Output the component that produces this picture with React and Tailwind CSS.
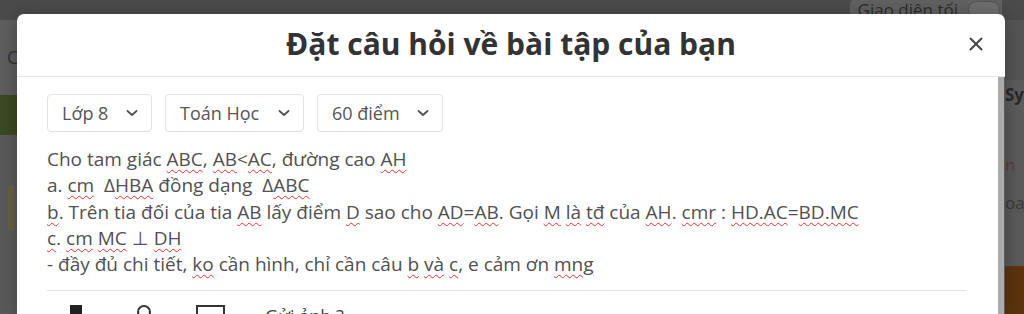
import React from "react";

const U = ({ children }) => (
  <span className="underline decoration-wavy decoration-[#e03131] decoration-1 underline-offset-[3px]">
    {children}
  </span>
);

const Chevron = () => (
  <svg width="12" height="8" viewBox="0 0 12 8" className="shrink-0">
    <path d="M1.5 2 L6 6 L10.5 2" fill="none" stroke="#555" strokeWidth="1.9" strokeLinecap="round" strokeLinejoin="round" />
  </svg>
);

const Select = ({ label, w }) => (
  <div className={`h-[38px] ${w} flex items-center justify-between pl-[14px] pr-[13px] border border-[#e2e2e2] rounded-[4px] text-[18px] text-[#555]`}>
    <span>{label}</span>
    <Chevron />
  </div>
);

export default function App() {
  return (
    <div className="relative w-[1024px] h-[314px] overflow-hidden bg-[#5b5b5b] font-['Open_Sans',sans-serif]">
      {/* dimmed page behind */}
      <div className="flex flex-col h-full">
        <div className="h-[20px] shrink-0 bg-[#4b4b4b] flex justify-end items-start pr-[22px]">
          <div className="flex items-center gap-[10px] bg-[#616161] pl-[8px] pr-[2px] rounded-l-[4px] h-[20px]">
            <span className="text-[17px] leading-[20px] text-[#2c2c2c]">Giao diện tối</span>
            <div className="w-[32px] h-[18px] rounded-full bg-[#6e6e6e] border border-[#555]" />
          </div>
        </div>
        <div className="flex flex-1">
          <div className="w-[17px] flex flex-col">
            <div className="h-[75px] flex items-center bg-[#5f5f5f]">
              <span className="text-[18px] text-[#333] pl-[7px]">C</span>
            </div>
            <div className="h-[40px] bg-[#3c4a23]" />
            <div className="h-[50px]" />
            <div className="w-[7px] h-[45px] ml-[8px] bg-[#6a6248] rounded-t-full" />
          </div>
          <div className="flex-1" />
          <div className="w-[19px] flex flex-col">
            <div className="h-[60px] bg-[#555]" />
            <div className="h-[30px] flex items-center bg-[#5d5d5d]">
              <span className="text-[17px] font-bold text-[#2a2a2a]">Sy</span>
            </div>
            <div className="h-[40px]" />
            <div className="h-[30px] flex items-center">
              <span className="text-[17px] text-[#5b3c3c]">n</span>
            </div>
            <div className="h-[10px]" />
            <div className="h-[26px] flex items-center">
              <span className="text-[17px] text-[#3a3a3a]">oa</span>
            </div>
            <div className="h-[50px]" />
            <div className="flex-1 bg-[#5c3510]" />
          </div>
        </div>
      </div>

      {/* modal */}
      <div className="absolute left-[17px] top-[14px] w-[988px] flex flex-col shadow-[0_4px_20px_rgba(0,0,0,0.3)]">
        <div className="relative h-[63px] bg-white rounded-t-[7px] border-b border-[#e3e6e8] flex items-center justify-center">
          <h2 className="text-[30px] font-bold text-[#333] leading-none pb-[2px]">Đặt câu hỏi về bài tập của bạn</h2>
          <button className="absolute right-[21px] top-[22px] w-[16px] h-[16px] flex items-center justify-center">
            <svg width="14" height="14" viewBox="0 0 14 14">
              <path d="M1.5 1.5 L12.5 12.5 M12.5 1.5 L1.5 12.5" stroke="#444" strokeWidth="2" strokeLinecap="round" />
            </svg>
          </button>
        </div>
        <div className="flex">
          <div className="w-[981px] bg-white pl-[30px] pr-[31px] pt-[17px] h-[240px]">
            <div className="flex gap-[13px]">
              <Select label="Lớp 8" w="w-[105px]" />
              <Select label="Toán Học" w="w-[139px]" />
              <Select label="60 điểm" w="w-[126px]" />
            </div>
            <div className="mt-[14px] text-[19px] leading-[26.3px] text-[#505050] whitespace-pre">
              <div>Cho tam giác <U>ABC</U>, <U>AB</U>&lt;<U>AC</U>, đường cao <U>AH</U></div>
              <div>a. <U>cm</U>  Δ<U>HBA</U> đồng dạng  Δ<U>ABC</U></div>
              <div><U>b</U>. Trên tia đối của tia <U>AB</U> lấy điểm <U>D</U> sao cho <U>AD</U>=<U>AB</U>. Gọi <U>M</U> <U>là</U> <U>tđ</U> của <U>AH</U>. <U>cmr</U> : <U>HD.AC</U>=<U>BD.MC</U></div>
              <div><U>c</U>. <U>cm</U> <U>MC</U> ⊥ <U>DH</U></div>
              <div>- đầy đủ chi tiết, <U>ko</U> cần hình, chỉ cần câu <U>b</U> <U>và</U> <U>c</U>, e cảm ơn <U>mng</U></div>
            </div>
            <div className="mt-[13px] border-t border-[#dfe5ea]" />
            <div className="flex items-start pt-[14px] text-[#333]">
              <div className="ml-[23px] w-[12px] h-[14px] bg-[#222]" />
              <div className="ml-[55px] w-[14px] h-[14px] rounded-full border-[2.5px] border-[#333]" />
              <div className="ml-[45px] w-[29px] h-[20px] border-[2px] border-[#333]" />
              <span className="ml-[40px] mt-[2px] text-[18px] leading-none text-[#444]">Gửi ảnh ?</span>
            </div>
          </div>
          <div className="w-[6px] bg-[#ababab]" />
        </div>
      </div>
    </div>
  );
}
